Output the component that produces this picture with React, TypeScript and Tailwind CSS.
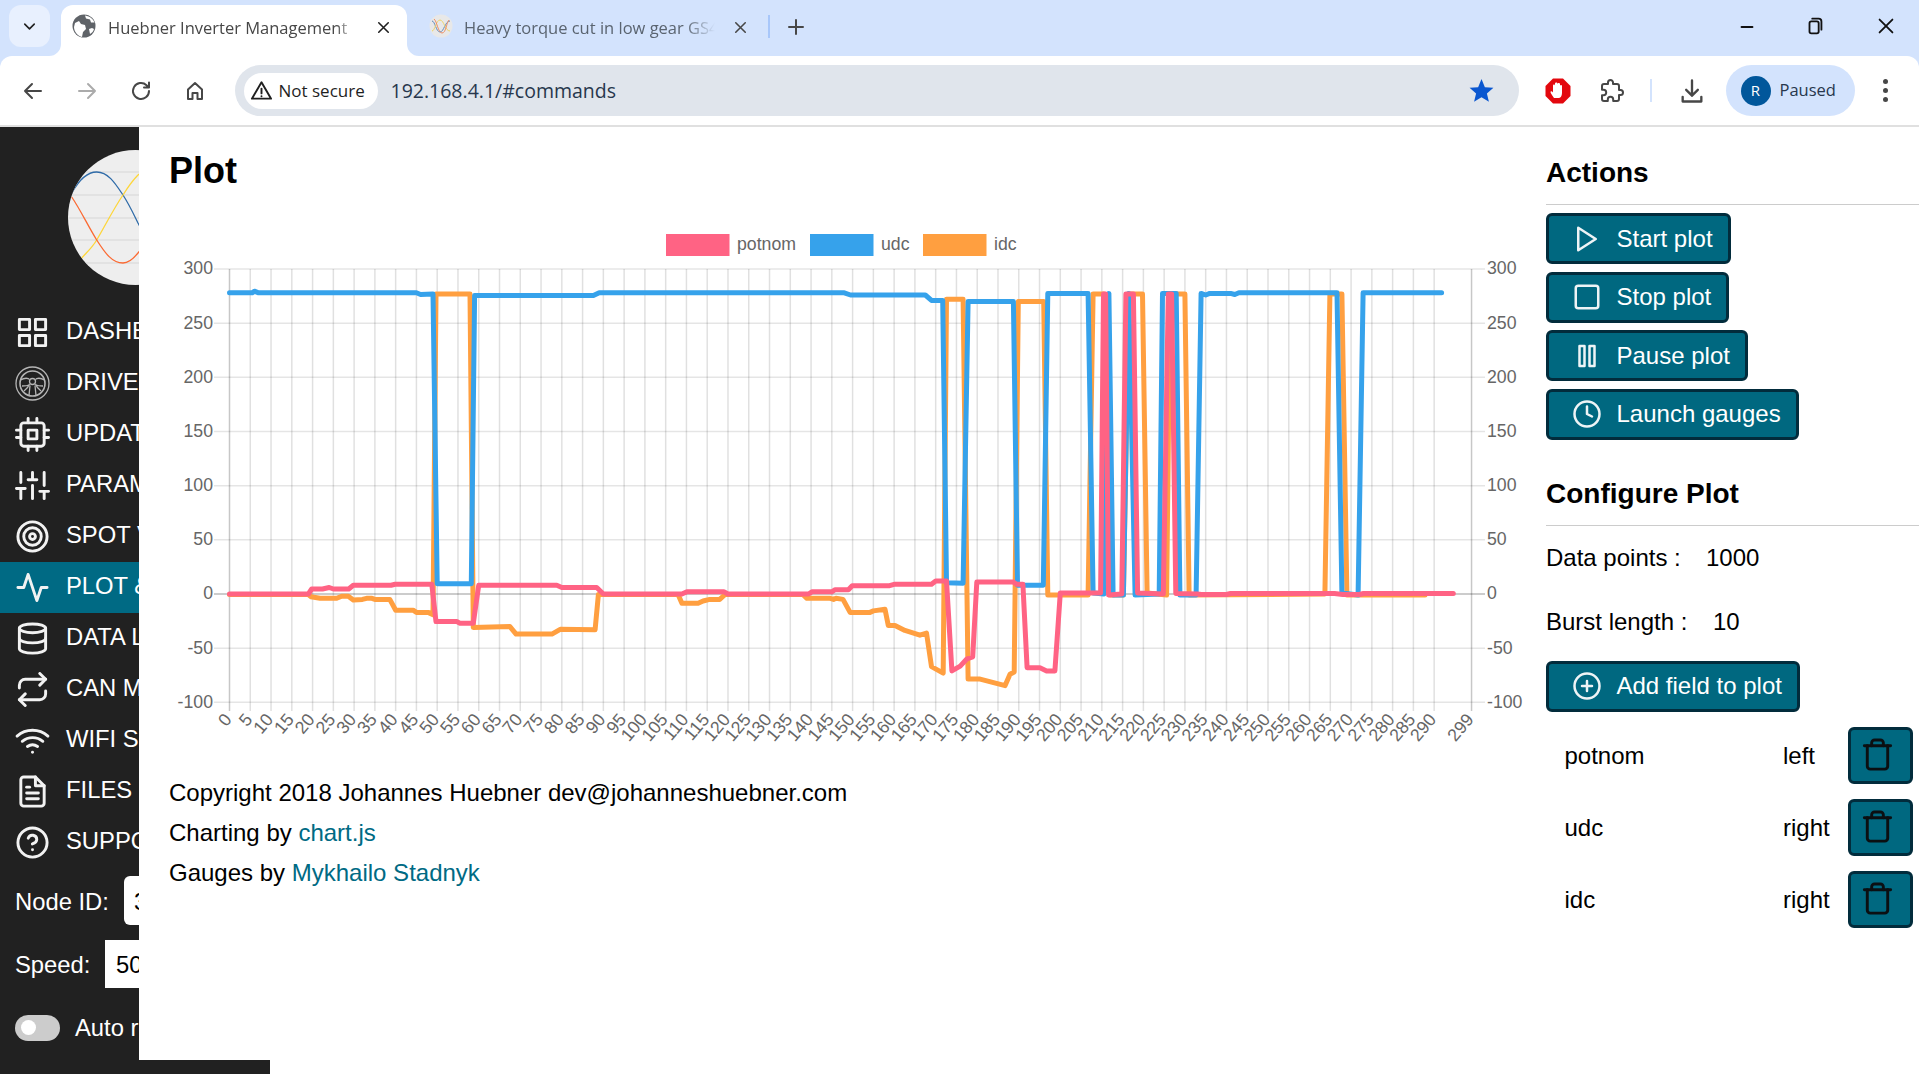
import React from "react";

type P = [number, number];
const px = (i: number) => 229.5 + i * 4.154;
const py = (v: number) => 594 - v * 1.0833;
const pts = (d: P[]) => d.map(([i, v]) => `${px(i).toFixed(1)},${py(v).toFixed(1)}`).join(" ");

const orange: P[] = [[0,-0.5],[19,-0.5],[19.6,-2.5],[21.8,-4],[25.8,-4],[27,-2],[28.6,-2],[29.8,-5.5],[32,-5],[33,-4],[34.3,-4],[35,-5],[38.6,-5],[40,-15],[44.2,-15],[45,-17],[47.8,-17],[49,-19],[49.7,277],[57.9,277],[58.7,-31],[67.5,-30],[69,-37],[77.6,-37],[79.6,-32.6],[88,-33],[88.8,-0.5],[108,-0.5],[108.9,-8.6],[112.8,-8.6],[114,-6.5],[115.6,-5],[118,-5],[119.3,-0.5],[138,-0.5],[139,-4],[144.6,-4],[145.4,-5],[146,-4],[147.7,-5],[149.4,-17],[154.2,-17],[155,-15.6],[157.8,-14],[158.6,-29],[160.2,-29],[162.6,-33.6],[166.2,-38],[167.8,-36],[169,-67],[171.8,-73],[172.6,272],[176.6,272],[177.8,-78.6],[180.7,-78.6],[183,-81],[186.7,-84.6],[187.9,-74],[188.9,-72],[189.9,270],[196,270],[197,-1],[206.7,-1],[207.9,277],[210.5,277],[212,-1],[215.2,-1],[216.5,277],[219.8,277],[220.9,1],[225.6,-1],[226.4,277],[230,277],[231,-1],[263.7,0],[264.9,277],[267.8,277],[269,-1],[287.8,-1]];
const blue: P[] = [[0,278],[5.5,278],[6,279.5],[7,278],[45,278],[46,276.5],[49,277],[50,9.5],[58.2,9.5],[59,275.5],[87.6,275.5],[89,278],[148,278],[149.5,276],[167.5,276],[169,271],[171.7,271],[172.6,10.4],[176.6,10],[177.8,270],[188.7,270],[189.7,8],[195.9,8],[197,277.5],[206.7,277.5],[207.9,1],[210.5,0],[211.7,277.5],[212.7,-1],[215.2,-1],[216.5,277.5],[218,-1],[223.8,0],[224.6,277.5],[227.9,277.5],[228.8,-1],[232.7,-1],[233.9,277.5],[235,276],[236,277.5],[241,277.5],[242,276.5],[243,278],[266.6,278],[267.8,1],[271.7,-1],[272.9,278],[291.8,278]];
const pink: P[] = [[0,0],[19,0],[19.8,4.6],[22.4,4.6],[24,6],[25,4.6],[28.7,4.6],[29.8,8],[38.9,8],[39.9,9],[48.7,9],[49.7,-25.5],[54.7,-25.5],[55.5,-27],[58.7,-27],[60,8],[78.8,8],[80,6],[88.4,6],[90,0],[108.9,0],[110.1,2],[119,2],[120,0],[139.4,0],[140.2,2],[145,2],[145.8,4],[149,4],[149.9,7.7],[158.9,7.7],[160,9],[169,9],[170,12],[172.6,12],[173.9,-71],[175.9,-66.6],[177.5,-60],[178.9,-58],[179.9,11],[188.7,11],[189.5,9],[191,9],[192,-68],[195.1,-68],[196.7,-71],[198.7,-71],[200,1],[209.7,1],[210.4,277],[210.9,277],[211.6,-1],[214.8,0],[215.8,277],[217.6,277],[218.6,1],[224.8,0],[226,277],[226.8,277],[227.8,0.5],[233,0],[234,-0.5],[240,-0.5],[241,0.5],[266,0.5],[268,-0.5],[272,-0.5],[273,0.5],[294.6,0.5]];

const xTicks: number[] = [];
for (let i = 0; i <= 290; i += 5) xTicks.push(i);
xTicks.push(299);
const yTicks = [300, 250, 200, 150, 100, 50, 0, -50, -100];

function Chart() {
  return (
    <svg viewBox="160 220 1370 540" width={1370} height={540} className="block ml-[21px]" fontFamily="'Liberation Sans', Arial, sans-serif">
      {xTicks.map((i) => (
        <line key={i} x1={px(i)} x2={px(i)} y1={269} y2={711} stroke={i === 0 || i === 299 ? "rgba(0,0,0,0.22)" : "rgba(0,0,0,0.12)"} strokeWidth={1.5} />
      ))}
      {yTicks.map((v) => (
        <line key={v} x1={214} x2={1485} y1={py(v)} y2={py(v)} stroke={v === 0 ? "rgba(0,0,0,0.27)" : "rgba(0,0,0,0.1)"} strokeWidth={1.5} />
      ))}
      {yTicks.map((v) => (
        <React.Fragment key={v}>
          <text x={213} y={py(v) + 0.7} textAnchor="end" fontSize={17.7} fill="#666" dominantBaseline="middle">{v}</text>
          <text x={1487} y={py(v) + 0.7} fontSize={17.7} fill="#666" dominantBaseline="middle">{v}</text>
        </React.Fragment>
      ))}
      {xTicks.map((i) => (
        <text key={i} x={px(i) + 3} y={720} textAnchor="end" fontSize={17.7} fill="#666" transform={`rotate(-50 ${px(i) + 3} 720)`}>{i}</text>
      ))}
      <rect x={666} y={234} width={63.5} height={22} fill="#ff6384" />
      <text x={737} y={249.5} fontSize={17.7} fill="#666">potnom</text>
      <rect x={810} y={234} width={63.5} height={22} fill="#36a2eb" />
      <text x={881} y={249.5} fontSize={17.7} fill="#666">udc</text>
      <rect x={923} y={234} width={63.5} height={22} fill="#ff9f40" />
      <text x={994} y={249.5} fontSize={17.7} fill="#666">idc</text>
      <polyline points={pts(orange)} fill="none" stroke="#ff9f40" strokeWidth={5} strokeLinejoin="round" strokeLinecap="round" />
      <polyline points={pts(blue)} fill="none" stroke="#36a2eb" strokeWidth={5} strokeLinejoin="round" strokeLinecap="round" />
      <polyline points={pts(pink)} fill="none" stroke="#ff6384" strokeWidth={5} strokeLinejoin="round" strokeLinecap="round" />
    </svg>
  );
}

function Ic({ size = 35, color = "#f2f2f2", children }: { size?: number; color?: string; children: React.ReactNode }) {
  return (
    <svg width={size} height={size} viewBox="0 0 24 24" fill="none" stroke={color} strokeWidth={2} strokeLinecap="round" strokeLinejoin="round" className="shrink-0">
      {children}
    </svg>
  );
}

const GridI = () => (<Ic><rect x="3" y="3" width="7" height="7" /><rect x="14" y="3" width="7" height="7" /><rect x="14" y="14" width="7" height="7" /><rect x="3" y="14" width="7" height="7" /></Ic>);
const Wheel = () => (
  <svg width={35} height={35} viewBox="0 0 35 35" fill="none" stroke="#b5b5b5" strokeWidth={1.3} className="shrink-0">
    <circle cx="17.5" cy="17.5" r="16.5" />
    <circle cx="17.5" cy="17.5" r="12.5" strokeWidth={1.6} />
    <circle cx="17.5" cy="15.5" r="3" />
    <path d="M5.5 14c4-2.500 8-2 9 -0.500M29.500 14c-4-2.500-8-2-9-0.500M14.500 18c-1 3-3 5-5.500 7M20.500 18c1 3 3 5 5.500 7M15 19.500l-1 10M20 19.500l1 10M7 20c3 0 5 0 7 -1M28 20c-3 0-5 0-7-1" />
  </svg>
);
const Cpu = () => (<Ic><rect x="4" y="4" width="16" height="16" rx="2" /><rect x="9" y="9" width="6" height="6" /><path d="M9 1v3M15 1v3M9 20v3M15 20v3M20 9h3M20 14h3M1 9h3M1 14h3" /></Ic>);
const Sliders = () => (<Ic><path d="M4 21v-7M4 10V3M12 21v-9M12 8V3M20 21v-5M20 12V3M1 14h6M9 8h6M17 16h6" /></Ic>);
const Target = () => (<Ic><circle cx="12" cy="12" r="10" /><circle cx="12" cy="12" r="6" /><circle cx="12" cy="12" r="2" /></Ic>);
const Activity = () => (<Ic><polyline points="22 12 18 12 15 21 9 3 6 12 2 12" /></Ic>);
const Database = () => (<Ic><ellipse cx="12" cy="5" rx="9" ry="3" /><path d="M21 12c0 1.66-4 3-9 3s-9-1.34-9-3" /><path d="M3 5v14c0 1.66 4 3 9 3s9-1.34 9-3V5" /></Ic>);
const Repeat = () => (<Ic><polyline points="17 1 21 5 17 9" /><path d="M3 11V9a4 4 0 0 1 4-4h14" /><polyline points="7 23 3 19 7 15" /><path d="M21 13v2a4 4 0 0 1-4 4H3" /></Ic>);
const Wifi = () => (<Ic><path d="M5 12.55a11 11 0 0 1 14.08 0" /><path d="M1.42 9a16 16 0 0 1 21.16 0" /><path d="M8.53 16.11a6 6 0 0 1 6.95 0" /><line x1="12" y1="20" x2="12.01" y2="20" /></Ic>);
const FileT = () => (<Ic><path d="M14 2H6a2 2 0 0 0-2 2v16a2 2 0 0 0 2 2h12a2 2 0 0 0 2-2V8z" /><polyline points="14 2 14 8 20 8" /><line x1="16" y1="13" x2="8" y2="13" /><line x1="16" y1="17" x2="8" y2="17" /><polyline points="10 9 9 9 8 9" /></Ic>);
const Help = () => (<Ic><circle cx="12" cy="12" r="10" /><path d="M9.09 9a3 3 0 0 1 5.83 1c0 2-3 3-3 3" /><line x1="12" y1="17" x2="12.01" y2="17" /></Ic>);

const navItems: { label: string; icon: React.ReactNode; active?: boolean }[] = [
  { label: "DASHBOARD", icon: <GridI /> },
  { label: "DRIVE", icon: <Wheel /> },
  { label: "UPDATE", icon: <Cpu /> },
  { label: "PARAMETERS", icon: <Sliders /> },
  { label: "SPOT VALUES", icon: <Target /> },
  { label: "PLOT & LOG", icon: <Activity />, active: true },
  { label: "DATA LOGGER", icon: <Database /> },
  { label: "CAN MAPPING", icon: <Repeat /> },
  { label: "WIFI SETTINGS", icon: <Wifi /> },
  { label: "FILES", icon: <FileT /> },
  { label: "SUPPORT", icon: <Help /> },
];

function Logo() {
  return (
    <svg width={135} height={135} viewBox="68 150 135 135" className="block ml-[68px]">
      <defs>
        <clipPath id="logoClip"><circle cx="135.5" cy="217.5" r="67.5" /></clipPath>
      </defs>
      <circle cx="135.5" cy="217.5" r="67.5" fill="#eeeeee" />
      <g clipPath="url(#logoClip)" fill="none">
        {[172, 195, 218, 240, 263].map((y) => (
          <line key={y} x1="68" x2="203" y1={y} y2={y} stroke="#d6d6d6" strokeWidth={1.2} />
        ))}
        <path d="M71.7 193C79 180 87 172 96.7 172C108 172 115 183 123 195C130 206 134 215 138 223C146 238 155 262 175 262" stroke="#2f6ba8" strokeWidth={1.3} />
        <path d="M81.7 258C87 252 92 248 96.7 240C105 226 114 208 123 195C128 187 133 180 138 175C146 168 155 172 165 185" stroke="#fdd63b" strokeWidth={1.3} />
        <path d="M71.7 197C80 209 88 226 96.7 240C105 253 112 263 123 263C129 263 134 258 138 253C146 244 155 228 165 210" stroke="#fb6a33" strokeWidth={1.3} />
      </g>
    </svg>
  );
}

function Sidebar() {
  return (
    <aside className="w-[270px] shrink-0 h-[947px] bg-[#212121] text-white pt-[23px] overflow-hidden text-[23.8px]">
      <Logo />
      <nav className="mt-[22px]">
        {navItems.map((n) => (
          <div key={n.label} className={`flex items-center h-[51px] pl-[15px] gap-[16px] ${n.active ? "bg-[#006a84]" : ""}`}>
            {n.icon}
            <span className="pb-[4px] whitespace-nowrap">{n.label}</span>
          </div>
        ))}
      </nav>
      <div className="flex items-center h-[49px] mt-[8px] pl-[15px]">
        <span className="w-[109px] pt-[2px]">Node ID:</span>
        <div className="w-[100px] h-full bg-white rounded-[6px] text-black pl-[10px] pt-[2px] flex items-center">3</div>
      </div>
      <div className="flex items-center h-[48px] mt-[15px] pl-[15px]">
        <span className="w-[90px] pt-[2px]">Speed:</span>
        <div className="w-[140px] h-full bg-white text-black pl-[11px] pt-[2px] flex items-center whitespace-nowrap">500 kbps</div>
      </div>
      <div className="flex items-center mt-[22px] pl-[15px] gap-[15px]">
        <div className="w-[45px] h-[26px] rounded-full bg-[#cccccc] flex items-center pl-[6px]">
          <div className="w-[15px] h-[15px] rounded-full bg-white" />
        </div>
        <span className="whitespace-nowrap">Auto refresh</span>
      </div>
    </aside>
  );
}

function ActionBtn({ icon, label }: { icon: React.ReactNode; label: string }) {
  return (
    <button className="flex items-center w-fit h-[51px] border-[3px] border-[#022c3c] bg-[#006880] rounded-[6px] pl-[23px] pr-[15px] gap-[14.5px] text-white text-[24px] whitespace-nowrap">
      {icon}
      <span>{label}</span>
    </button>
  );
}

function FieldRow({ name, axis }: { name: string; axis: string }) {
  return (
    <div className="flex items-center h-[57px] pl-[18.5px]">
      <span className="w-[218.5px] pt-[1px]">{name}</span>
      <span className="w-[65px] pt-[1px]">{axis}</span>
      <button className="w-[65px] h-[57px] border-[3px] border-[#022c3c] bg-[#006880] rounded-[6px] pl-[8.5px] pb-[1px] flex items-center">
        <Ic color="#0b0f12">
          <polyline points="3 6 5 6 21 6" />
          <path d="M19 6v14a2 2 0 0 1-2 2H7a2 2 0 0 1-2-2V6m3 0V4a2 2 0 0 1 2-2h4a2 2 0 0 1 2 2v2" />
        </Ic>
      </button>
    </div>
  );
}

function Main() {
  return (
    <main className="relative -ml-[131px] flex-1 h-[933px] bg-white flex text-black text-[24px]">
      <section className="w-[1407px] shrink-0 pt-[23px]">
        <h1 className="ml-[30px] text-[36px] leading-[42px] font-bold">Plot</h1>
        <div className="mt-[28px]"><Chart /></div>
        <div className="ml-[30px] mt-[13px] leading-[40px]">
          <p>Copyright 2018 Johannes Huebner dev@johanneshuebner.com</p>
          <p>Charting by <span className="text-[#006a84]">chart.js</span></p>
          <p>Gauges by <span className="text-[#006a84]">Mykhailo Stadnyk</span></p>
        </div>
      </section>
      <section className="flex-1 pt-[30px] pr-[6px]">
        <h3 className="text-[28px] leading-[32px] font-bold">Actions</h3>
        <div className="h-px bg-[#cccccc] mt-[15px] -mr-[6px]" />
        <div className="flex flex-col gap-[7.5px] mt-[8px]">
          <ActionBtn label="Start plot" icon={<Ic size={30} color="#eef4f6"><polygon points="5 3 19 12 5 21 5 3" /></Ic>} />
          <ActionBtn label="Stop plot" icon={<Ic size={30} color="#eef4f6"><rect x="3" y="3" width="18" height="18" rx="2" ry="2" /></Ic>} />
          <ActionBtn label="Pause plot" icon={<Ic size={30} color="#eef4f6"><rect x="6" y="4" width="4" height="16" /><rect x="14" y="4" width="4" height="16" /></Ic>} />
          <ActionBtn label="Launch gauges" icon={<Ic size={30} color="#eef4f6"><circle cx="12" cy="12" r="10" /><polyline points="12 6 12 12 16 14" /></Ic>} />
        </div>
        <h3 className="text-[28px] leading-[32px] font-bold mt-[38px]">Configure Plot</h3>
        <div className="h-px bg-[#cccccc] mt-[15px] -mr-[6px]" />
        <div className="flex items-center h-[32px] mt-[16px]">
          <span className="w-[160px]">Data points :</span><span>1000</span>
        </div>
        <div className="flex items-center h-[32px] mt-[32px]">
          <span className="w-[167px]">Burst length :</span><span>10</span>
        </div>
        <div className="mt-[23px]">
          <ActionBtn label="Add field to plot" icon={<Ic size={30} color="#eef4f6"><circle cx="12" cy="12" r="10" /><line x1="12" y1="8" x2="12" y2="16" /><line x1="8" y1="12" x2="16" y2="12" /></Ic>} />
        </div>
        <div className="flex flex-col gap-[15px] mt-[15px]">
          <FieldRow name="potnom" axis="left" />
          <FieldRow name="udc" axis="right" />
          <FieldRow name="idc" axis="right" />
        </div>
      </section>
    </main>
  );
}

const chromeFont = "font-['Open_Sans','Noto_Sans',sans-serif]";

function TabStrip() {
  return (
    <div className={`flex h-[56px] bg-[#d3e3fd] ${chromeFont}`}>
      <div className="ml-[9px] mt-[5px] w-[41px] h-[42px] rounded-[12px] bg-[#e8f0fe] flex items-center justify-center">
        <Ic size={19} color="#1f1f1f"><polyline points="6 9 12 15 18 9" /></Ic>
      </div>
      <div className="relative ml-[11px] mt-[5px] w-[346px] h-[51px] bg-white rounded-t-[12px] flex items-start pt-[9px] pl-[11px]">
        <svg width="12" height="12" viewBox="0 0 12 12" className="absolute -left-[12px] bottom-0"><path d="M12 0v12H0a12 12 0 0 0 12-12z" fill="#fff" /></svg>
        <svg width="12" height="12" viewBox="0 0 12 12" className="absolute -right-[12px] bottom-0"><path d="M0 0v12h12a12 12 0 0 1-12-12z" fill="#fff" /></svg>
        <svg width="24" height="24" viewBox="0 0 24 24" className="shrink-0">
          <circle cx="12" cy="12" r="11.5" fill="#5f6368" />
          <path d="M3 9l4-2 2 3 4 1 1 4-3 3-1 5c-4-1-8-5-8-10zM13 1.500l1 3 4 1 1 3 3.500 0c-1-3-4-6-9.500-7zM17 15l3-1 2 1c-.5 2-2 4-4 5z" fill="#fff" />
        </svg>
        <span className="ml-[12px] w-[248px] text-[16.5px] leading-[27px] text-[#474747] whitespace-nowrap overflow-hidden [mask-image:linear-gradient(to_right,black_92%,transparent)]">Huebner Inverter Management</span>
        <div className="ml-[18px] mt-[4px]"><Ic size={19} color="#1f1f1f"><path d="M6 6l12 12M18 6L6 18" /></Ic></div>
      </div>
      <div className="ml-[22px] mt-[5px] flex items-start pt-[9px]">
        <svg width="24" height="24" viewBox="0 0 24 24" className="shrink-0" fill="none" strokeWidth="1">
          <circle cx="12" cy="12" r="11.5" fill="#e8e8e8" stroke="none" />
          <path d="M3 7c3 0 4 11 8 11s5-11 10-11" stroke="#5f8bbd" />
          <path d="M3 17c3 0 4-11 8-11s5 11 10 11" stroke="#eed469" />
          <path d="M5 5c3 2 4 14 8 14s4-9 7-13" stroke="#ee8f64" />
        </svg>
        <span className="ml-[11px] w-[251px] text-[16.5px] leading-[27px] text-[#5a6470] whitespace-nowrap overflow-hidden [mask-image:linear-gradient(to_right,black_88%,transparent)]">Heavy torque cut in low gear GS450h</span>
        <div className="ml-[16px] mt-[4px]"><Ic size={19} color="#474747"><path d="M6 6l12 12M18 6L6 18" /></Ic></div>
        <div className="ml-[18px] mt-[1px] w-[2px] h-[23px] bg-[#a8c7fa]" />
        <div className="ml-[14px] mt-[1px]"><Ic size={24} color="#474747"><path d="M12 5v14M5 12h14" /></Ic></div>
      </div>
      <div className="ml-auto flex items-start pt-[14px] text-black">
        <div className="mr-[46px] mt-[2px]"><Ic size={22} color="#111"><path d="M6 12h12" /></Ic></div>
        <div className="mr-[49px] mt-[1px]"><Ic size={22} color="#111"><rect x="6" y="7" width="10" height="13" rx="2" /><path d="M9 4h7a3 3 0 0 1 3 3v9" /></Ic></div>
        <div className="mr-[22px] mt-[1px]"><Ic size={22} color="#111"><path d="M5 5l14 14M19 5L5 19" /></Ic></div>
      </div>
    </div>
  );
}

function Toolbar() {
  return (
    <div className="bg-[#d3e3fd]">
      <div className={`flex items-center h-[69px] bg-white rounded-t-[12px] ${chromeFont}`}>
        <div className="ml-[21px]"><Ic size={24} color="#474747"><path d="M20 12H4M11 5l-7 7 7 7" /></Ic></div>
        <div className="ml-[30px]"><Ic size={24} color="#ababab"><path d="M4 12h16M13 5l7 7-7 7" /></Ic></div>
        <div className="ml-[30px]"><Ic size={24} color="#474747"><path d="M20 12a8 8 0 1 1-2.500-5.800L20 8.500M20 3.500v5h-5" /></Ic></div>
        <div className="ml-[30px]"><Ic size={24} color="#474747"><path d="M5 10.500L12 4l7 6.500V20h-4.500v-6h-5v6H5z" /></Ic></div>
        <div className="ml-[28px] w-[1284px] h-[51px] rounded-full bg-[#e0e5ec] flex items-center pl-[8.5px] pr-[24px]">
          <div className="h-[36px] w-[134px] rounded-full bg-white flex items-center pl-[6px] gap-[6px]">
            <Ic size={23} color="#1f1f1f"><path d="M12 3.500L2 20.500h20z" /><path d="M12 10v5M12 18h.01" /></Ic>
            <span className="text-[17px] text-[#1f1f1f] font-medium whitespace-nowrap">Not secure</span>
          </div>
          <span className="ml-[13px] pt-[1px] text-[19.5px] text-[#27374d] whitespace-nowrap">192.168.4.1/#commands</span>
          <svg width="27" height="27" viewBox="0 0 24 24" className="ml-auto" fill="#0b57d0"><path d="M12 1.800l3 7.200 7.600.6-5.800 5 1.800 7.500L12 18l-6.600 4.100 1.800-7.500-5.800-5L9 9z" /></svg>
        </div>
        <svg width="28" height="28" viewBox="0 0 28 28" className="ml-[25px] shrink-0">
          <path d="M9 1.500h10L26.500 9v10L19 26.500H9L1.500 19V9z" fill="#e3080e" />
          <path d="M10 21c-2-3-3.500-5-3.500-6s1.500-1 2.500 .5V8.500c0-1.500 2-1.500 2 0V13V6.500c0-1.500 2.500-1.500 2.500 0V13V7c0-1.500 2.500-1.500 2.500 0v7V9c0-1.500 2-1.500 2 0v7c0 3-1.500 5-3.500 5z" fill="#fff" />
        </svg>
        <div className="ml-[27.5px]"><Ic size={24} color="#474747"><path d="M20.500 11H19V7a2 2 0 0 0-2-2h-4V3.500a2.500 2.500 0 0 0-5 0V5H4a2 2 0 0 0-2 2v3.800h1.500a2.700 2.700 0 0 1 0 5.400H2V20a2 2 0 0 0 2 2h3.800v-1.500a2.700 2.700 0 0 1 5.400 0V22H17a2 2 0 0 0 2-2v-4h1.500a2.500 2.500 0 0 0 0-5z" /></Ic></div>
        <div className="ml-[26px] w-[2px] h-[23px] bg-[#d3e3fd]" />
        <div className="ml-[26px]"><Ic size={28} color="#474747"><path d="M12 3v13M7 11l5 5 5-5M4 17v4h16v-4" /></Ic></div>
        <div className="ml-[20px] w-[129px] h-[51px] rounded-full bg-[#d3e3fd] flex items-center pl-[15px] gap-[9px]">
          <div className="w-[30px] h-[30px] rounded-full bg-[#01579b] text-white text-[15px] flex items-center justify-center">R</div>
          <span className="text-[16.5px] text-[#27374d]">Paused</span>
        </div>
        <div className="ml-[28px] flex flex-col gap-[4px]">
          <div className="w-[5px] h-[5px] rounded-full bg-[#474747]" />
          <div className="w-[5px] h-[5px] rounded-full bg-[#474747]" />
          <div className="w-[5px] h-[5px] rounded-full bg-[#474747]" />
        </div>
      </div>
      <div className="h-[2px] bg-[#e0e0e0]" />
    </div>
  );
}

export default function App() {
  return (
    <div className="w-[1919px] h-[1074px] overflow-hidden bg-white font-['Liberation_Sans',Arial,sans-serif]">
      <TabStrip />
      <Toolbar />
      <div className="flex">
        <Sidebar />
        <Main />
      </div>
    </div>
  );
}
